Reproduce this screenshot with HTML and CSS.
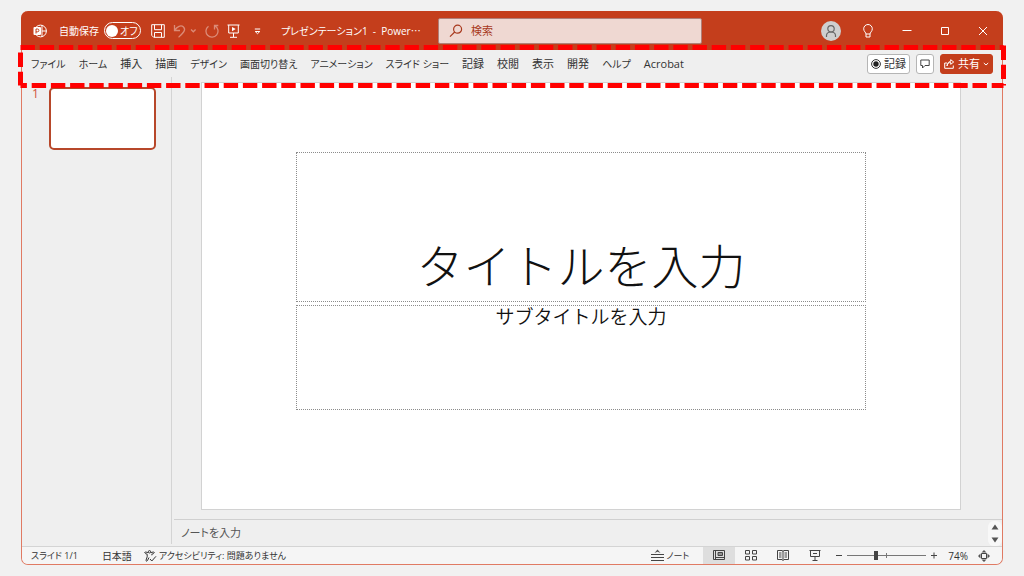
FILE: index.html
```html
<!DOCTYPE html>
<html lang="ja">
<head>
<meta charset="utf-8">
<meta name="viewport" content="width=device-width, initial-scale=1">
<title>プレゼンテーション1 - PowerPoint</title>
<link rel="stylesheet" href="styles.css">
</head>
<body>
<div class="window">
  <header class="titlebar">
    <svg class="app-logo" width="14" height="14" viewBox="0 0 14 14" fill="none" stroke="#fff"><circle cx="7.500" cy="7" r="5.900"/><path d="M9 1v12M9 7h4.500"/><rect x=".5" y="3" width="7.500" height="8" rx="1" fill="#fff" stroke="none"/><path d="M3 9.500V5h1.500a1.300 1.300 0 0 1 0 2.800H3" stroke="#c43e1c"/></svg>
    <label class="autosave">自動保存
      <span class="switch"><input type="checkbox" class="switch-box"><span>オフ</span></span>
    </label>
    <div class="quick">
      <button class="icon-btn" aria-label="上書き保存"><svg width="14" height="14" viewBox="0 0 14 14"><path d="M.7.7h12.600v12.600H2.700l-2-2zM3.500.7v5h7v-5M3.500 13V8.500h7V13"/></svg></button>
      <button class="icon-btn dim" aria-label="元に戻す"><svg width="24" height="14" viewBox="0 0 24 14"><path d="M1.500 1v5.500H7M1.800 6.200C4 2.500 8 .5 10.500 3c3 3-.5 6-5 10.300M18 5.500l2.300 2.300 2.300-2.300" stroke-width="1.300"/></svg></button>
      <button class="icon-btn dim" aria-label="やり直し"><svg width="14" height="14" viewBox="0 0 14 14"><path d="M3.500 2.200A6 6 0 1 0 10 1.900M13.300 1.500H9.500v4" stroke-width="1.300"/></svg></button>
      <button class="icon-btn" aria-label="最初から開始"><svg width="13" height="14" viewBox="0 0 13 14"><path d="M.5 1h12M1.700 1v8h9.600V1M6.500 9v4M3 13.300h7"/><path d="M5 3l3.700 2.100L5 7.200z" fill="#fff" stroke="none"/></svg></button>
      <button class="icon-btn" aria-label="クイック アクセス ツール バーのユーザー設定"><svg width="7" height="14" viewBox="0 0 7 14"><path d="M.8 5h5.400M1.200 7.500h4.600L3.500 9.700z"/></svg></button>
    </div>
    <h1 class="doc-title">プレゼンテーション1 &nbsp;- &nbsp;Power⋯</h1>
    <div class="search">
      <svg width="14" height="14" viewBox="0 0 14 14" fill="none" stroke="#a8381d" stroke-width="1.200"><circle cx="8.600" cy="5.200" r="4"/><path d="M5.700 8L1 12.700"/></svg>
      <input class="search-input" type="text" placeholder="検索" aria-label="検索">
    </div>
    <div class="account">
      <button class="avatar" aria-label="アカウント"><svg width="20" height="20" viewBox="0 0 20 20" fill="none" stroke="#666" stroke-width="1.200"><circle cx="10" cy="7.800" r="3.200"/><path d="M5.500 16v-1.500a4.500 3.500 0 0 1 9 0V16"/></svg></button>
      <button class="icon-btn" aria-label="ヒント"><svg width="12" height="14" viewBox="0 0 12 14"><path d="M4 10C4 8.500 1.700 7.500 1.700 4.800a4.300 4.300 0 0 1 8.600 0C10.300 7.500 8 8.500 8 10zM4 10v3h4v-3"/></svg></button>
    </div>
    <div class="controls">
      <button class="icon-btn" aria-label="最小化"><svg width="10" height="10" viewBox="0 0 10 10"><path d="M.5 4.500h9"/></svg></button>
      <button class="icon-btn" aria-label="最大化"><svg width="10" height="10" viewBox="0 0 10 10"><path d="M1.500 1.500h7v7h-7z"/></svg></button>
      <button class="icon-btn" aria-label="閉じる"><svg width="10" height="10" viewBox="0 0 10 10"><path d="M1 1l8 8M9 1L1 9"/></svg></button>
    </div>
  </header>

  <div class="ribbon">
    <nav class="tabs">
      <a class="kana" href="#">ファイル</a><a class="kana" href="#">ホーム</a><a href="#">挿入</a><a href="#">描画</a><a class="kana" href="#">デザイン</a><a class="kana" href="#">画面切り替え</a><a class="kana" href="#">アニメーション</a><a class="kana" href="#">スライド ショー</a><a href="#">記録</a><a href="#">校閲</a><a href="#">表示</a><a href="#">開発</a><a class="kana" href="#">ヘルプ</a><a href="#">Acrobat</a>
    </nav>
    <div class="actions">
      <button class="action"><svg width="10" height="10" viewBox="0 0 10 10"><circle cx="5" cy="5" r="4.400" fill="none" stroke="#333"/><circle cx="5" cy="5" r="2.700" fill="#222"/></svg>記録</button>
      <button class="action" aria-label="コメント"><svg width="10" height="10" viewBox="0 0 10 10" fill="none" stroke="#444"><path d="M.8 1h8.400v5.500H5L2.500 9V6.500H.8z"/></svg></button>
      <button class="action share"><svg width="11" height="10" viewBox="0 0 11 10" fill="none" stroke="#fff"><path d="M3 4H.7v5.300h8.600V6.500M3 7c.3-2.500 1.500-3.500 3.700-3.500V5.300L9.700 3 6.700.7v1.600C5 2.500 3.500 3.500 3 7"/></svg>共有<svg width="6" height="6" viewBox="0 0 6 6" fill="none" stroke="#fff"><path d="M.8 2L3 4l2.200-2"/></svg></button>
    </div>
    <svg class="highlight" aria-hidden="true">
      <g transform="translate(.5 .5)">
        <line class="dash" x1="0" y1="2" x2="100%" y2="2"/>
        <line class="dash dash-bottom" x1="0" y1="100%" x2="100%" y2="100%"/>
        <line class="dash" x1="0" y1="7" x2="0" y2="100%"/>
        <line class="dash" x1="100%" y1="0" x2="100%" y2="100%"/>
      </g>
    </svg>
  </div>

  <main class="workspace">
    <aside class="thumbs">
      <span class="thumb-number">1</span>
      <button class="thumb" aria-label="スライド 1"></button>
    </aside>
    <section class="editor">
      <div class="stage">
        <article class="slide">
          <div class="placeholder title-box">タイトルを入力</div>
          <div class="placeholder subtitle-box">サブタイトルを入力</div>
        </article>
      </div>
      <div class="notes">
        <span>ノートを入力</span>
        <div class="scroller">
          <button class="icon-btn" aria-label="上へ"><svg width="8" height="6" viewBox="0 0 8 6"><path class="solid" d="M4 .5L7.500 5.500h-7z"/></svg></button>
          <button class="icon-btn" aria-label="下へ"><svg width="8" height="6" viewBox="0 0 8 6"><path class="solid" d="M4 5.500L7.500.5h-7z"/></svg></button>
        </div>
      </div>
    </section>
  </main>

  <footer class="status">
    <span>スライド 1/1</span>
    <span class="language">日本語</span>
    <span class="access"><svg width="13" height="12" viewBox="0 0 13 12" fill="none" stroke="#333"><circle cx="5.500" cy="1.800" r="1.200"/><path d="M4 2.800L2 2C.8 1.600.3 3 1.400 3.500L3.200 4.300v2.500L2 10.200c-.2 1 1 1.300 1.400.5L5 7.500M7 2.800L9 2c1.200-.4 1.700 1 .6 1.500L7.800 4.300v1M6 9l1.800 2L12 6.300"/></svg>アクセシビリティ: 問題ありません</span>
    <div class="views">
      <button class="view note-btn"><svg width="13" height="13" viewBox="0 0 13 13"><path d="M0 5.500h13M0 8.500h13M0 11.500h13"/><path class="solid" d="M3.500 4l3-3.500 3 3.500-3-1.200z"/></svg>ノート</button>
      <button class="view active" aria-label="標準"><svg width="12" height="11" viewBox="0 0 12 11"><path d="M.5.5h11v9H.5zM2.500.5v9M2.500 7.500h9M5 2.500h4.500v3H5zM5 4h4.500"/></svg></button>
      <button class="view" aria-label="スライド一覧"><svg width="12" height="11" viewBox="0 0 12 11"><path d="M.5.5h4v3.500h-4zM7.500.5h4v3.500h-4zM.5 6.500h4v3.500h-4zM7.500 6.500h4v3.500h-4z"/></svg></button>
      <button class="view" aria-label="閲覧表示"><svg width="12" height="11" viewBox="0 0 12 11"><path d="M.5.5H5l1 .7L7 .5h4.500v9H7l-1 1-1-1H.5zM6 1v9.500M2 3h2.500M2 5h2.500M2 7h2.500M7.500 3H10M7.500 5H10M7.500 7H10"/></svg></button>
      <button class="view" aria-label="スライド ショー"><svg width="12" height="12" viewBox="0 0 12 12"><path d="M.5.500h11M1.500.5v6h9v-6M4 3.500h4M6 6.500v4M3.500 10.500h5"/></svg></button>
    </div>
    <div class="zoom">
      <button class="icon-btn" aria-label="縮小"><svg width="8" height="8" viewBox="0 0 8 8"><path class="dark" d="M1 3.500h6"/></svg></button>
      <input class="zoom-range" type="range" min="0" max="100" value="35" aria-label="ズーム">
      <button class="icon-btn" aria-label="拡大"><svg width="8" height="8" viewBox="0 0 8 8"><path class="dark" d="M1 3.500h6M4 .5v6"/></svg></button>
      <span class="zoom-value">74%</span>
      <button class="icon-btn" aria-label="ウィンドウに合わせる"><svg width="12" height="12" viewBox="0 0 12 12"><path class="dark" d="M3.500 3.500h5v5h-5z"/><path class="solid" d="M6 0l2.500 2.500h-5zM6 12l2.500-2.500h-5zM0 6l2.500-2.500v5zM12 6L9.500 3.500v5z"/></svg></button>
    </div>
  </footer>
</div>
</body>
</html>
```
FILE: styles.css
```css
* { box-sizing: border-box; }

body {
  margin: 0;
  min-height: 100vh;
  padding: 11px 21px;
  display: flex;
  background: #f1f1f1;
  color: #333;
  font: 11px/16px "Open Sans", "Noto Sans CJK JP", sans-serif;
  font-feature-settings: "palt";
}

button, input {
  margin: 0;
  padding: 0;
  border: 0;
  background: none;
  color: inherit;
  font: inherit;
  font-feature-settings: inherit;
}

button { display: flex; align-items: center; justify-content: center; white-space: nowrap; }
svg { display: block; flex: none; }

.window {
  flex: 1;
  display: flex;
  flex-direction: column;
  border: 1px solid #e07a63;
  border-top: 0;
  border-radius: 7px;
  background: #efefef;
}

/* Title bar */
.titlebar {
  display: flex;
  align-items: center;
  height: 39px;
  margin: 0 -1px;
  padding: 0 15px 0 12px;
  border-radius: 7px 7px 0 0;
  background: #c43e1c;
  color: #fff;
}

.icon-btn svg { fill: none; stroke: #fff; }
.dim { opacity: 0.4; }
.app-logo { margin-right: 12px; }

.autosave {
  display: flex;
  align-items: center;
  gap: 5px;
  font-size: 10px;
  white-space: nowrap;
}

.switch {
  display: flex;
  align-items: center;
  gap: 2px;
  width: 37px;
  height: 17px;
  padding: 0 1px;
  border: 1px solid #fff;
  border-radius: 9px;
}

.switch-box {
  appearance: none;
  flex: none;
  width: 12px;
  height: 12px;
  border-radius: 50%;
  background: #fff;
}

.quick {
  display: flex;
  align-items: center;
  gap: 8px;
  margin-left: 10px;
}

.quick .icon-btn:last-child { margin-left: 6px; }

.doc-title {
  flex: 0 0 157px;
  margin: 0 0 0 20px;
  overflow: hidden;
  white-space: nowrap;
  font-size: 10px;
  font-weight: 400;
}

.search {
  display: flex;
  align-items: center;
  gap: 8px;
  flex: 0 1 264px;
  height: 26px;
  padding: 0 10px;
  border: 1px solid #b08078;
  border-radius: 2px;
  background: #efd8d2;
}

.search-input { flex: 1; min-width: 0; color: #a8381d; }
.search-input::placeholder { color: #a8381d; opacity: 1; }

.account {
  display: flex;
  align-items: center;
  gap: 21px;
  margin-left: auto;
}

.avatar {
  width: 20px;
  height: 20px;
  border-radius: 50%;
  background: #cfcfcf;
}

.controls { display: flex; gap: 28px; margin-left: 28px; }

/* Ribbon */
.ribbon {
  position: relative;
  display: flex;
  align-items: center;
  justify-content: space-between;
  height: 27px;
  padding: 0 9px;
}

.tabs { display: flex; gap: 13px; }
.tabs a { color: #333; text-decoration: none; white-space: nowrap; }
.tabs .kana { font-size: 10px; }

.actions { display: flex; gap: 6px; }

.action {
  gap: 3px;
  height: 20px;
  padding: 0 3px;
  border: 1px solid #b5b5b5;
  border-radius: 3px;
  background: #fff;
}

.share { border-color: #c43e1c; background: #c43e1c; color: #fff; }

/* Dashed frame around the ribbon */
.highlight {
  position: absolute;
  top: -5px;
  left: -2px;
  width: calc(100% + 3px);
  height: 40px;
  overflow: visible;
  pointer-events: none;
  z-index: 1;
}

.dash { stroke: #f00; stroke-width: 5px; stroke-dasharray: 14.4 4.8; }
.dash-bottom { stroke-dashoffset: 8px; }

/* Workspace */
.workspace { flex: 1; display: flex; }

.thumbs {
  display: flex;
  align-items: flex-start;
  gap: 10px;
  width: 150px;
  margin-bottom: 2px;
  padding: 10px 0 0 10px;
  border-right: 1px solid #d4d4d4;
}

.thumb-number { color: #d0533a; font-size: 12px; line-height: 14px; }

.thumb {
  width: 107px;
  height: 63px;
  border: 2px solid #b7472a;
  border-radius: 5px;
  background: #fff;
}

.editor {
  flex: 1;
  display: flex;
  flex-direction: column;
  margin-left: 2px;
}

.stage { flex: 1; display: flex; padding: 5px 41px 9px 27px; }

.slide {
  flex: 1;
  display: flex;
  flex-direction: column;
  gap: 3px;
  padding: 69px 94px 0;
  border: 1px solid #d2d2d2;
  background: #fff;
}

.placeholder {
  display: flex;
  justify-content: center;
  border: 1px dotted #8c8c8c;
  color: #111;
  font-family: "Noto Sans CJK JP", sans-serif;
  font-feature-settings: normal;
}

.title-box {
  align-items: flex-end;
  height: 150px;
  font-size: 47px;
  font-weight: 300;
  line-height: 74px;
}

.subtitle-box { height: 105px; font-size: 19px; font-weight: 350; line-height: 20px; }

.notes {
  display: flex;
  align-items: center;
  justify-content: space-between;
  height: 27px;
  padding-left: 7px;
  border-top: 1px solid #d0d0d0;
  color: #555;
}

.scroller {
  display: flex;
  flex-direction: column;
  gap: 7px;
  padding: 3px;
  border-radius: 6px;
  background: #f8f8f8;
}

.icon-btn .solid, .view .solid { fill: #555; stroke: none; }
.icon-btn .dark { stroke: #444; }

/* Status bar */
.status {
  display: flex;
  align-items: center;
  height: 18px;
  padding: 0 12px 0 9px;
  border-top: 1px solid #d4d4d4;
  border-radius: 0 0 6px 6px;
  background: #f5f5f5;
  font-size: 9px;
}

.language { margin-left: 24px; font-size: 10px; }
.access { display: flex; align-items: center; gap: 2px; margin-left: 12px; }
.views { display: flex; margin-left: auto; }
.view { width: 32px; height: 17px; }
.view svg { fill: none; stroke: #444; }
.note-btn { width: auto; gap: 2px; margin-right: 14px; }
.active { background: #dedede; }

.zoom { display: flex; align-items: center; gap: 4px; margin-left: 4px; }

.zoom-range {
  appearance: none;
  width: 79px;
  height: 9px;
  background: linear-gradient(#777, #777) 50% 50% / 100% 1px no-repeat,
              linear-gradient(#777, #777) 50% 50% / 1px 5px no-repeat;
}

.zoom-range::-webkit-slider-thumb {
  appearance: none;
  width: 4px;
  height: 9px;
  background: #444;
}

.zoom-value { margin: 0 6px; font-size: 10px; }
```
